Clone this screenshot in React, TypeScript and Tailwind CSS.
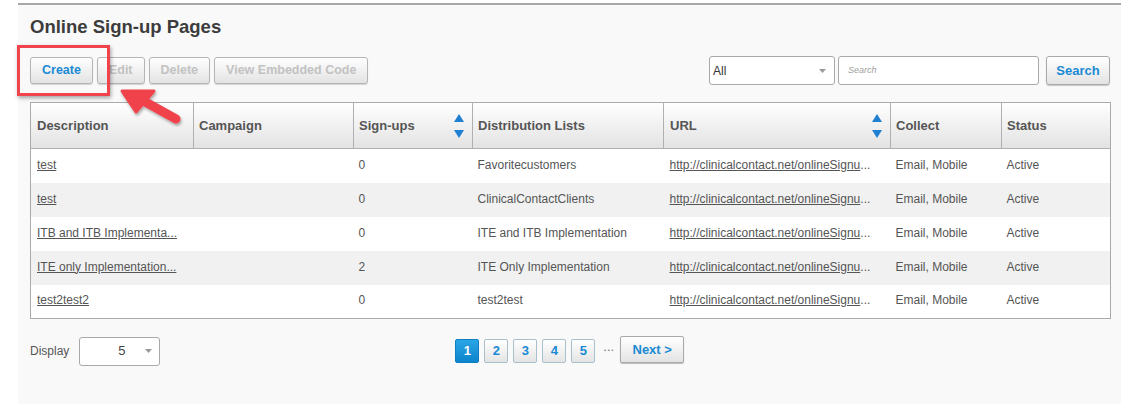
const rows = [
  { desc: 'test', signups: '0', list: 'Favoritecustomers' },
  { desc: 'test', signups: '0', list: 'ClinicalContactClients' },
  { desc: 'ITB and ITB Implementa...', signups: '0', list: 'ITE and ITB Implementation' },
  { desc: 'ITE only Implementation...', signups: '2', list: 'ITE Only Implementation' },
  { desc: 'test2test2', signups: '0', list: 'test2test' },
];

function SortArrows() {
  return (
    <svg width="10" height="24" viewBox="0 0 10 24" className="shrink-0">
      <path d="M5 0 L10 8 L0 8 Z" fill="#1f7fd0" />
      <path d="M0 16 L10 16 L5 24 Z" fill="#1f7fd0" />
    </svg>
  );
}

function Btn({ label, disabled }: { label: string; disabled?: boolean }) {
  return (
    <button
      className={`h-[27px] px-[11px] rounded-[3px] border border-[#b5b5b5] bg-gradient-to-b from-white to-[#e3e3e3] shadow-[0_1px_1px_rgba(0,0,0,0.15)] text-[12.5px] font-bold ${
        disabled ? 'text-[#c2c2c2]' : 'text-[#1a8ad4]'
      }`}
    >
      {label}
    </button>
  );
}

function PageBtn({ n, active }: { n: string; active?: boolean }) {
  return (
    <button
      className={`w-[24px] h-[24px] rounded-[2px] border text-[13px] font-bold ${
        active
          ? 'bg-gradient-to-b from-[#2aa5e6] to-[#0a84cc] border-[#0b7fc2] text-white'
          : 'bg-gradient-to-b from-white to-[#e4e4e4] border-[#a9bfcc] text-[#1a8ad4]'
      }`}
    >
      {n}
    </button>
  );
}

export default function App() {
  return (
    <div className="min-h-screen bg-white" style={{ fontFamily: '"Liberation Sans", Arial, sans-serif' }}>
      <div className="relative ml-[18px] w-[1103px] min-h-[404px] bg-[#f9f9f9] border-t-2 border-[#a8a8a8] mt-[3px] px-[12px] pb-[40px]">
        <h1 className="pt-[10px] text-[18.5px] font-bold text-[#3c3c3c] leading-[24px]">Online Sign-up Pages</h1>

        <div className="flex items-center mt-[17px] w-[1080px]">
          <div className="flex gap-[4px]">
            <Btn label="Create" />
            <Btn label="Edit" disabled />
            <Btn label="Delete" disabled />
            <Btn label="View Embedded Code" disabled />
          </div>
          <div className="ml-auto flex items-center">
            <div className="w-[126px] h-[29px] bg-white border border-[#a9a9a9] rounded-[3px] flex items-center justify-between pl-[3px] pr-[8px] text-[12px] text-[#333]">
              <span>All</span>
              <svg width="7" height="4" viewBox="0 0 7 4">
                <path d="M0 0 L7 0 L3.5 4 Z" fill="#9a9a9a" />
              </svg>
            </div>
            <div className="ml-[3px] w-[201px] h-[29px] bg-white border border-[#a9a9a9] rounded-[3px] flex items-center pl-[9px] text-[9px] italic text-[#a0a0a0]">
              Search
            </div>
            <button className="ml-[7px] h-[29px] w-[64px] rounded-[3px] border border-[#a9a9a9] bg-gradient-to-b from-white to-[#e3e3e3] shadow-[0_1px_1px_rgba(0,0,0,0.2)] text-[13px] font-bold text-[#1a8ad4]">
              Search
            </button>
          </div>
        </div>

        <table className="mt-[17px] w-[1081px] table-fixed border border-[#aaaaaa] border-collapse text-[12px] text-[#555]">
          <colgroup>
            <col className="w-[163px]" />
            <col className="w-[160px]" />
            <col className="w-[119px]" />
            <col className="w-[191px]" />
            <col className="w-[227px]" />
            <col className="w-[111px]" />
            <col />
          </colgroup>
          <thead>
            <tr className="h-[46px] bg-gradient-to-b from-white to-[#e2e2e2] text-[13px] font-bold text-[#555] text-left">
              <th className="px-[6px] border-r border-b border-[#b0b0b0]">Description</th>
              <th className="px-[5px] border-r border-b border-[#b0b0b0]">Campaign</th>
              <th className="px-[5px] pr-[8px] border-r border-b border-[#b0b0b0]">
                <div className="flex items-center justify-between">
                  <span>Sign-ups</span>
                  <SortArrows />
                </div>
              </th>
              <th className="px-[5px] border-r border-b border-[#b0b0b0]">Distribution Lists</th>
              <th className="px-[6px] pr-[8px] border-r border-b border-[#b0b0b0]">
                <div className="flex items-center justify-between">
                  <span>URL</span>
                  <SortArrows />
                </div>
              </th>
              <th className="px-[5px] border-r border-b border-[#b0b0b0]">Collect</th>
              <th className="px-[5px] border-b border-[#b0b0b0]">Status</th>
            </tr>
          </thead>
          <tbody>
            {rows.map((r, i) => (
              <tr key={i} className={`h-[34px] ${i % 2 === 1 ? 'bg-[#f1f1f1]' : 'bg-white'}`}>
                <td className="px-[6px] pb-[2px]">
                  <span className="underline text-[#555]">{r.desc}</span>
                </td>
                <td className="px-[5px]"></td>
                <td className="px-[5px] pb-[2px]">{r.signups}</td>
                <td className="px-[5px] pb-[2px]">{r.list}</td>
                <td className="px-[6px] pb-[2px] whitespace-nowrap">
                  <span className="underline">http://clinicalcontact.net/onlineSignu</span>...
                </td>
                <td className="px-[5px] pb-[2px]">Email, Mobile</td>
                <td className="px-[5px] pb-[2px]">Active</td>
              </tr>
            ))}
          </tbody>
        </table>

        <div className="relative mt-[17px] flex items-center h-[30px]">
          <span className="text-[12px] text-[#555]">Display</span>
          <div className="ml-[10px] w-[81px] h-[29px] bg-white border border-[#a9a9a9] rounded-[3px] flex items-center justify-end pr-[7px] text-[13px] text-[#444]">
            <span className="mr-[20px]">5</span>
            <svg width="7" height="4" viewBox="0 0 7 4">
              <path d="M0 0 L7 0 L3.5 4 Z" fill="#9a9a9a" />
            </svg>
          </div>
          <div className="ml-[295px] flex items-center gap-[5px]">
            <PageBtn n="1" active />
            <PageBtn n="2" />
            <PageBtn n="3" />
            <PageBtn n="4" />
            <PageBtn n="5" />
            <span className="ml-[3px] text-[13px] text-[#777] -mt-[8px]">...</span>
            <button className="ml-[1px] -mt-[3px] h-[27px] w-[64px] rounded-[2px] border border-[#a9a9a9] bg-gradient-to-b from-white to-[#e3e3e3] shadow-[0_1px_1px_rgba(0,0,0,0.25)] text-[13px] font-bold text-[#1a8ad4]">
              Next &gt;
            </button>
          </div>
        </div>

        <div className="absolute left-[-1px] top-[40px] w-[93px] h-[51px] border-[3px] border-[#f0434b] shadow-[1px_2px_4px_rgba(0,0,0,0.35)]"></div>
        <svg className="absolute left-[100px] top-[80px]" width="70" height="42" viewBox="0 0 70 42">
          <defs>
            <filter id="sh" x="-20%" y="-20%" width="150%" height="160%">
              <feDropShadow dx="1" dy="2" stdDeviation="1.5" floodColor="#000" floodOpacity="0.35" />
            </filter>
          </defs>
          <g filter="url(#sh)">
            <path d="M58 34 L22 14" stroke="#f0434b" strokeWidth="9" strokeLinecap="round" />
            <path d="M4 6 L36 6 L18 27 Z" fill="#f0434b" stroke="#f0434b" strokeWidth="3" strokeLinejoin="round" />
          </g>
        </svg>
      </div>
    </div>
  );
}
